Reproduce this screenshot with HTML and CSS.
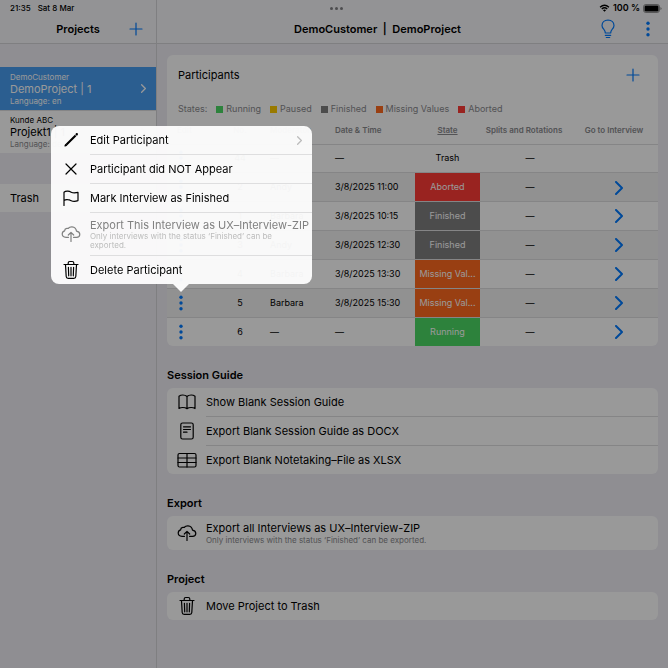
FILE: index.html
```html
<!DOCTYPE html>
<html lang="en">
<head>
  <meta charset="UTF-8" />
  <meta name="viewport" content="width=device-width, initial-scale=1.0"/>
  <title>DemoCustomer | DemoProject</title>
  <link rel="stylesheet" href="styles.css">
</head>
<body>
  <!-- Shared icons -->
  <svg class="sprite" aria-hidden="true">
    <symbol id="plus" viewBox="0 0 14 14"><path d="M7 1v12M1 7h12"/></symbol>
    <symbol id="chevron" viewBox="0 0 8 14"><path d="M1 1l6 6-6 6"/></symbol>
    <symbol id="dots" viewBox="0 0 4 16"><g fill="currentColor" stroke="none"><circle cx="2" cy="2.3" r="1.7"/><circle cx="2" cy="8" r="1.7"/><circle cx="2" cy="13.7" r="1.7"/></g></symbol>
    <symbol id="trash" viewBox="0 0 20 20"><path d="M3 4.5h14M7.2 4.300V3q0-1.500 1.500-1.500h2.600q1.500 0 1.500 1.500v1.300M4.500 4.700l.7 11.800q.1 1.900 2 1.900h5.600q1.900 0 2-1.900l.7-11.800M10 7.300v8.500M7.400 7.300l.3 8.500M12.600 7.300l-.3 8.500"/></symbol>
    <symbol id="cloud" viewBox="0 0 20 20"><path d="M7.500 13.300H5q-3.800-.2-3.800-3.300 0-2.400 2.400-3.100 0-2 2-2.500.7-.2 1.500.1Q8.600 2.700 11 2.800q4 .4 4.500 4.300 3.300.5 3.300 3.300-.1 2.700-3.300 2.900h-3M10 17.500V8.300M7.300 11L10 8.300l2.700 2.700"/></symbol>
  </svg>

  <div class="app">
    <div class="statusbar">
      <div class="clock"><span>21:35</span><span>Sat 8 Mar</span></div>
      <div class="multitask"><i></i><i></i><i></i></div>
      <div class="device">
        <svg class="wifi" viewBox="0 0 12 9"><path d="M1 3.600q5-4.300 10 0M2.900 5.500q3.100-2.600 6.200 0" fill="none" stroke="currentColor" stroke-width="1.500"/><path d="M6 8.800L4.300 6.900q1.700-1.200 3.400 0z" fill="currentColor"/></svg>
        <span>100 %</span>
        <svg class="battery" viewBox="0 0 19 9"><rect x=".5" y=".5" width="16" height="8" rx="2.300" fill="none" stroke="currentColor" opacity=".4"/><rect x="1.500" y="1.500" width="14" height="6" rx="1.300" fill="currentColor"/><path d="M17.500 3v3q1-.5 1-1.500t-1-1.500" fill="currentColor" opacity=".5"/></svg>
      </div>
    </div>

    <aside class="sidebar">
      <header class="navbar">
        <h2>Projects</h2>
        <button class="icon-btn" aria-label="Add project"><svg class="icon plus"><use href="#plus"/></svg></button>
      </header>
      <nav>
        <a class="project active" href="#">
          <span class="labels"><small>DemoCustomer</small><b>DemoProject | 1</b><small>Language: en</small></span>
          <svg class="icon chevron-sm"><use href="#chevron"/></svg>
        </a>
        <a class="project" href="#">
          <span class="labels"><small>Kunde ABC</small><b>Projekt1 | 1</b><small class="muted">Language: de</small></span>
          <svg class="icon chevron-sm"><use href="#chevron"/></svg>
        </a>
        <a class="trash-link" href="#">Trash</a>
      </nav>
    </aside>

    <main class="content">
      <header class="navbar">
        <h1>DemoCustomer&nbsp; |&nbsp; DemoProject</h1>
        <button class="icon-btn" aria-label="Tips"><svg class="icon bulb" viewBox="0 0 14 20"><path d="M4.300 14q0-2-1.600-3.900Q1 8.300 1 6.500 1.300 1.200 7 1q5.700.2 6 5.500 0 1.800-1.700 3.600Q9.700 12 9.700 14zM4.300 16.300h5.400M5.300 18.500h3.400"/></svg></button>
        <button class="icon-btn" aria-label="More"><svg class="icon dots"><use href="#dots"/></svg></button>
      </header>

      <div class="page">
        <section class="card participants">
          <div class="card-head">
            <h2>Participants</h2>
            <button class="icon-btn" aria-label="Add participant"><svg class="icon plus"><use href="#plus"/></svg></button>
          </div>
          <div class="legend">
            <span class="legend-title">States:</span>
            <span><i class="running"></i>Running</span>
            <span><i class="paused"></i>Paused</span>
            <span><i class="finished"></i>Finished</span>
            <span><i class="missing"></i>Missing Values</span>
            <span><i class="aborted"></i>Aborted</span>
          </div>
          <table>
            <colgroup><col class="c-edit"><col class="c-no"><col class="c-mod"><col class="c-date"><col class="c-state"><col><col class="c-go"></colgroup>
            <thead>
              <tr><th class="edit">Edit</th><th>No.</th><th class="left">Moderator</th><th class="left">Date &amp; Time</th><th><u>State</u></th><th class="splits">Splits and Rotations</th><th class="go">Go to Interview</th></tr>
            </thead>
            <tbody>
              <tr><td class="edit"><button class="icon-btn" aria-label="Edit 44"><svg class="icon dots"><use href="#dots"/></svg></button></td><td>44</td><td class="left">—</td><td class="left">—</td><td>Trash</td><td>—</td><td></td></tr>
              <tr><td class="edit"><button class="icon-btn" aria-label="Edit 2"><svg class="icon dots"><use href="#dots"/></svg></button></td><td>2</td><td class="left">Andy</td><td class="left">3/8/2025 11:00</td><td class="state aborted">Aborted</td><td>—</td><td><button class="icon-btn" aria-label="Go to interview 2"><svg class="icon chevron"><use href="#chevron"/></svg></button></td></tr>
              <tr><td class="edit"><button class="icon-btn" aria-label="Edit 1"><svg class="icon dots"><use href="#dots"/></svg></button></td><td>1</td><td class="left">Barbara</td><td class="left">3/8/2025 10:15</td><td class="state finished">Finished</td><td>—</td><td><button class="icon-btn" aria-label="Go to interview 1"><svg class="icon chevron"><use href="#chevron"/></svg></button></td></tr>
              <tr><td class="edit"><button class="icon-btn" aria-label="Edit 3"><svg class="icon dots"><use href="#dots"/></svg></button></td><td>3</td><td class="left">Andy</td><td class="left">3/8/2025 12:30</td><td class="state finished">Finished</td><td>—</td><td><button class="icon-btn" aria-label="Go to interview 3"><svg class="icon chevron"><use href="#chevron"/></svg></button></td></tr>
              <tr><td class="edit"><button class="icon-btn" aria-label="Edit 4"><svg class="icon dots"><use href="#dots"/></svg></button></td><td>4</td><td class="left">Barbara</td><td class="left">3/8/2025 13:30</td><td class="state missing">Missing Val...</td><td>—</td><td><button class="icon-btn" aria-label="Go to interview 4"><svg class="icon chevron"><use href="#chevron"/></svg></button></td></tr>
              <tr><td class="edit"><button class="icon-btn" aria-label="Edit 5"><svg class="icon dots"><use href="#dots"/></svg></button></td><td>5</td><td class="left">Barbara</td><td class="left">3/8/2025 15:30</td><td class="state missing">Missing Val...</td><td>—</td><td><button class="icon-btn" aria-label="Go to interview 5"><svg class="icon chevron"><use href="#chevron"/></svg></button></td></tr>
              <tr><td class="edit"><button class="icon-btn" aria-label="Edit 6"><svg class="icon dots"><use href="#dots"/></svg></button></td><td>6</td><td class="left">—</td><td class="left">—</td><td class="state running">Running</td><td>—</td><td><button class="icon-btn" aria-label="Go to interview 6"><svg class="icon chevron"><use href="#chevron"/></svg></button></td></tr>
            </tbody>
          </table>
        </section>

        <h3>Session Guide</h3>
        <section class="card">
          <button class="row">
            <svg class="icon glyph" viewBox="0 0 20 20"><path d="M10 4.500Q8.500 3 5.800 3 3.500 3 2 4.200v12.300q1.500-1 3.800-1 2.700 0 4.200 1.200 1.500-1.200 4.200-1.200 2.300 0 3.800 1V4.200Q16.500 3 14.200 3q-2.700 0-4.200 1.500v12"/></svg>
            <span class="text">Show Blank Session Guide</span>
          </button>
          <button class="row">
            <svg class="icon glyph" viewBox="0 0 20 20"><rect x="3.800" y="2" width="12.400" height="16" rx="1.800"/><path d="M6.500 5.800h7M6.500 8.500h7M6.500 11.200h3.500"/></svg>
            <span class="text">Export Blank Session Guide as DOCX</span>
          </button>
          <button class="row">
            <svg class="icon glyph" viewBox="0 0 20 20"><rect x="1" y="3.500" width="18" height="13.500" rx="1.500"/><path d="M1 8h18M1 12.500h18M10 3.500V17"/></svg>
            <span class="text">Export Blank Notetaking–File as XLSX</span>
          </button>
        </section>

        <h3>Export</h3>
        <section class="card">
          <button class="row tall">
            <svg class="icon glyph"><use href="#cloud"/></svg>
            <span class="text">Export all Interviews as UX–Interview-ZIP<small>Only interviews with the status ‘Finished’ can be exported.</small></span>
          </button>
        </section>

        <h3>Project</h3>
        <section class="card">
          <button class="row">
            <svg class="icon glyph"><use href="#trash"/></svg>
            <span class="text">Move Project to Trash</span>
          </button>
        </section>
      </div>
    </main>
  </div>

  <div class="backdrop"></div>

  <div class="popover" role="menu">
    <button class="row" role="menuitem">
      <svg class="icon glyph" viewBox="0 0 20 20"><path d="M5.300 14.700L14.600 5.400M15.300 4.700l.7-.7" stroke-width="2.100" stroke-linecap="butt"/><path d="M15.600 4.400l.3-.3" stroke-width="2.100"/><path d="M4 16l1.400-.6-.8-.8z" fill="currentColor"/></svg>
      <span class="text">Edit Participant</span>
      <svg class="icon chevron-sm"><use href="#chevron"/></svg>
    </button>
    <button class="row" role="menuitem">
      <svg class="icon glyph" viewBox="0 0 20 20"><path d="M5 5l10 10M15 5L5 15"/></svg>
      <span class="text">Participant did NOT Appear</span>
    </button>
    <button class="row" role="menuitem">
      <svg class="icon glyph" viewBox="0 0 20 20"><path d="M3 17.500V4.200Q4.500 3 6.800 3.200q1.700.2 3.400 1 2.500 1.200 6.800.2v8.200q-3.800 1.400-6.800.1-2-.9-3.600-1Q4.500 11.500 3 12.500"/></svg>
      <span class="text">Mark Interview as Finished</span>
    </button>
    <button class="row tall" role="menuitem" disabled>
      <svg class="icon glyph"><use href="#cloud"/></svg>
      <span class="text">Export This Interview as UX–Interview-ZIP<small>Only interviews with the status ‘Finished’ can be exported.</small></span>
    </button>
    <button class="row" role="menuitem">
      <svg class="icon glyph"><use href="#trash"/></svg>
      <span class="text">Delete Participant</span>
    </button>
  </div>
</body>
</html>
```
FILE: styles.css
```css
* {
  box-sizing: border-box;
}

body {
  margin: 0;
  font-family: Inter, "Liberation Sans", sans-serif;
  font-size: 11px;
  line-height: 14px;
  color: #000;
  background: #eeedf4;
}

h1, h2, h3 {
  margin: 0;
  font-size: 11px;
  font-weight: 600;
}

button {
  font: inherit;
  color: inherit;
  background: none;
  border: none;
  padding: 0;
}

a {
  color: inherit;
  text-decoration: none;
}

small {
  font-size: 8px;
  line-height: 10px;
}

.sprite {
  display: none;
}

.icon {
  display: block;
  fill: none;
  stroke: currentColor;
  stroke-width: 1.2;
  stroke-linecap: round;
  stroke-linejoin: round;
}

.icon-btn {
  color: #007aff;
}

.plus {
  width: 14px;
  height: 14px;
}

.dots {
  width: 4px;
  height: 16px;
}

.bulb {
  width: 14px;
  height: 20px;
}

.chevron {
  width: 8px;
  height: 14px;
  stroke-width: 2;
}

.chevron-sm {
  width: 5px;
  height: 9px;
  stroke-width: 2;
}

.glyph {
  width: 20px;
  height: 20px;
  flex: none;
}

/* Frame */
.app {
  display: grid;
  grid-template-columns: 157px 1fr;
  min-height: 100vh;
}

.statusbar {
  position: absolute;
  top: 0;
  left: 0;
  right: 0;
  display: grid;
  grid-template-columns: 1fr auto 1fr;
  align-items: center;
  height: 16px;
  padding: 0 6px 0 10px;
  font-size: 8px;
  font-weight: 500;
}

.clock {
  display: flex;
  gap: 7px;
}

.multitask {
  display: flex;
  gap: 2px;
}

.multitask i {
  width: 3px;
  height: 3px;
  border-radius: 50%;
  background: #808084;
}

.device {
  display: flex;
  justify-content: flex-end;
  align-items: center;
  gap: 3px;
  font-size: 9px;
  font-weight: 600;
}

.wifi {
  width: 11px;
  height: 8px;
}

.battery {
  width: 19px;
  height: 9px;
}

.navbar {
  display: flex;
  align-items: center;
  height: 44px;
  padding-top: 15px;
  background: #f6f6f8;
  border-bottom: 1px solid #d4d4d8;
}

.navbar h1,
.navbar h2 {
  flex: 1;
  text-align: center;
}

/* Sidebar */
.sidebar {
  border-right: 1px solid #d4d4d8;
}

.sidebar .navbar {
  padding-right: 13px;
}

.sidebar .navbar h2 {
  padding-left: 27px;
}

.sidebar nav {
  padding-top: 23px;
}

.project {
  display: flex;
  align-items: center;
  height: 43px;
  padding: 0 10px;
  background: #fff;
}

.project + .project {
  border-top: 1px solid #dededf;
}

.project .labels {
  flex: 1;
  display: grid;
}

.project b {
  font-weight: 400;
}

.project .muted {
  color: #8a8a8e;
}

.project .chevron-sm {
  color: #c4c4c8;
}

.project.active,
.project.active .chevron-sm {
  color: #fff;
}

.project.active {
  background: #499df0;
}

.trash-link {
  display: block;
  margin-top: 31px;
  padding: 7px 10px;
  background: #fff;
}

/* Main area */
.content .navbar {
  gap: 31px;
  padding-right: 18px;
}

.content h1 {
  margin-right: -28px;
}

.page {
  padding: 11px 10px 44px;
}

.card {
  background: #fff;
  border-radius: 6px;
  overflow: hidden;
}

.card-head {
  display: flex;
  justify-content: space-between;
  align-items: center;
  padding: 13px 18px 13px 11px;
}

.card-head h2 {
  font-weight: 400;
}

.legend {
  display: flex;
  gap: 9px;
  padding: 7px 11px 0;
  font-size: 9px;
  color: #8a8a8e;
}

.legend span {
  display: flex;
  align-items: center;
  gap: 3px;
}

.legend i {
  width: 7px;
  height: 7px;
}

.running { background: #4cd964; }
.paused { background: #ffcc00; }
.finished { background: #7f7f7f; }
.missing { background: #ff6a1f; }
.aborted { background: #ff3b36; }

table {
  width: 100%;
  height: 230px;
  table-layout: fixed;
  border-collapse: collapse;
  font-size: 9px;
  text-align: center;
}

.c-edit { width: 43px; }
.c-no { width: 60px; }
.c-mod { width: 65px; }
.c-date { width: 80px; }
.c-state { width: 65px; }
.c-go { width: 78px; }

th, td {
  height: 28px;
  padding: 0;
  white-space: nowrap;
}

th {
  font-size: 8px;
  font-weight: 600;
  color: #8a8a8e;
}

th.splits {
  padding-right: 12px;
}

th.go {
  padding-right: 10px;
}

.left {
  text-align: left;
}

.edit {
  padding-left: 12px;
  text-align: left;
}

th.edit {
  padding-left: 10px;
}

tbody tr {
  border-top: 1px solid #dededf;
}

tbody tr:nth-child(even) {
  background: #f2f2f2;
}

td .icon-btn {
  display: inline-block;
  vertical-align: middle;
}

.state {
  color: #fff;
}

h3 {
  padding: 22px 0 6px;
}

/* Icon rows, shared by the cards and the popover */
.row {
  position: relative;
  display: flex;
  align-items: center;
  gap: 9px;
  width: 100%;
  min-height: 28px;
  padding: 0 10px;
  text-align: left;
}

.row + .row {
  margin-top: 1px;
}

.row + .row::before {
  content: "";
  position: absolute;
  top: -1px;
  left: 39px;
  right: 0;
  height: 1px;
  background: #dededf;
}

.row.tall {
  min-height: 34px;
}

.row .text {
  flex: 1;
}

.row small {
  display: block;
  color: #8a8a8e;
}

/* Open menu */
.backdrop {
  position: fixed;
  inset: 0;
  background: rgba(0, 0, 0, 0.4);
}

.popover {
  position: absolute;
  top: 126px;
  left: 51px;
  width: 261px;
  border-radius: 8px;
  background: rgba(252, 252, 252, 0.97);
}

.popover::after {
  content: "";
  position: absolute;
  top: 100%;
  left: 122px;
  border: 8px solid transparent;
  border-top-color: #fafafa;
  border-bottom: none;
}

.popover .row:disabled {
  min-height: 42px;
  padding-right: 0;
  color: #808080;
}

.popover .row:disabled small {
  padding-right: 10px;
  line-height: 9px;
  color: #bcbcbc;
}

.popover .chevron-sm {
  color: #bcbcbc;
}
```
